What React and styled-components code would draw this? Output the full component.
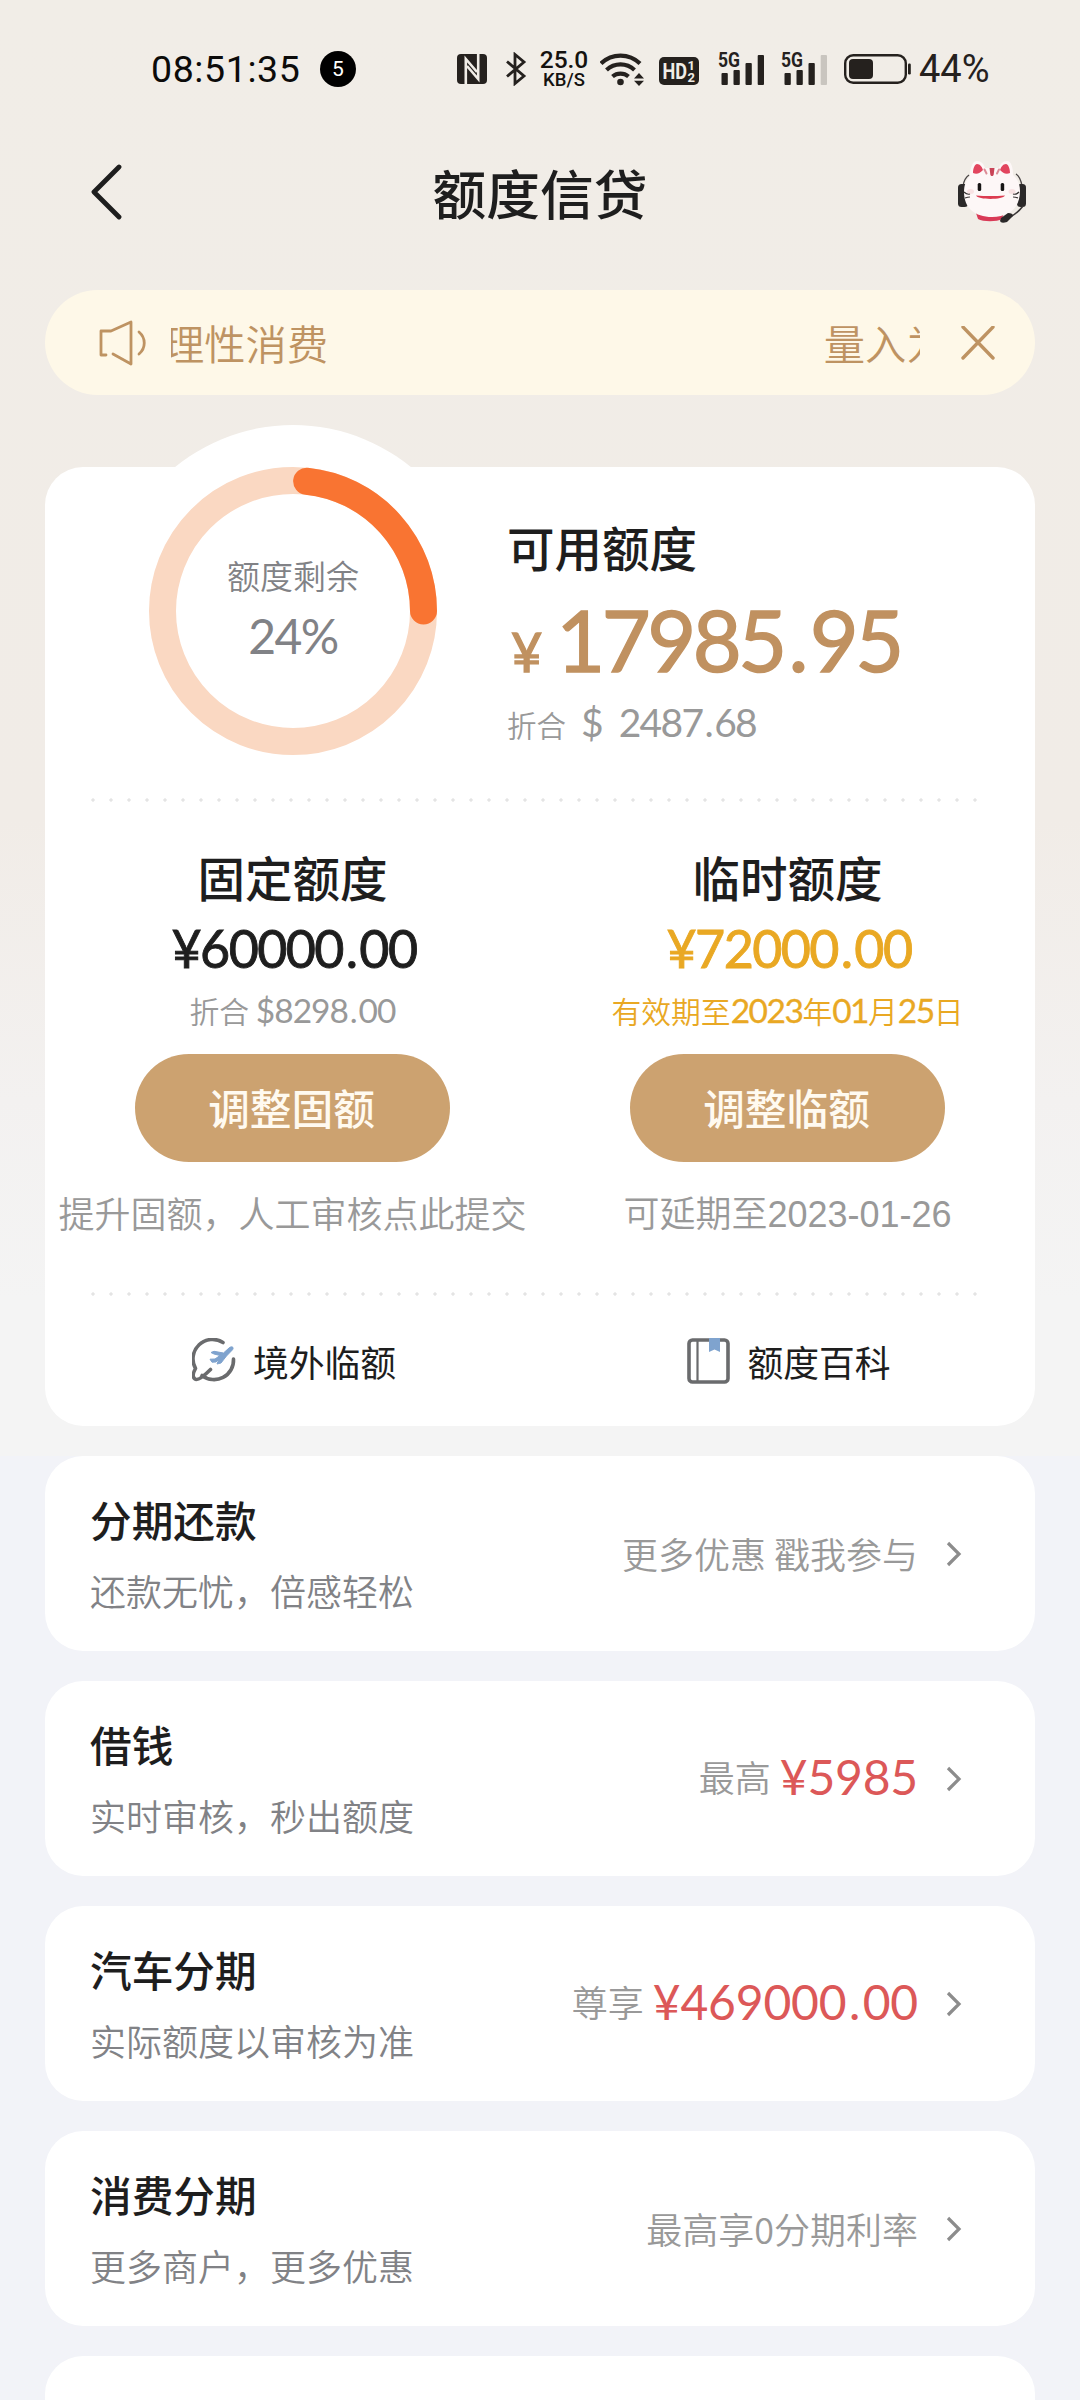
import React from 'react';
import styled, { createGlobalStyle } from 'styled-components';

const palette = {
  ink: '#1e1e1e',
  status: '#25211e',
  grey: '#999999',
  slate: '#818286',
  bronze: '#c09160',
  tan: '#cca270',
  amber: '#e9a823',
  red: '#dc5858',
  notice: '#be9362',
};

const cjk = `'Noto Sans CJK SC', sans-serif`;

const GlobalStyle = createGlobalStyle`
  body {
    background: #f2f3f8;
    margin: 0;
  }
  * {
    box-sizing: border-box;
  }
`;

const Page = styled.div`
  background: linear-gradient(
      180deg,
      #f1ede7 0,
      #f1ece7 820px,
      #f3f1f0 1100px,
      #f4f4f4 1300px,
      #f4f4f4 1456px,
      transparent 1456px
    ),
    #f2f3f8;
  color: ${palette.ink};
  font-family: ${cjk};
  height: 2400px;
  overflow: hidden;
  width: 1080px;
  svg {
    display: block;
    flex: none;
  }
`;

// digits sit in Lato, everything else in the CJK face
const Digits = styled.span`
  font-family: Lato, ${cjk};
  font-size: ${p => p.$size}px;
  font-weight: 400;
  letter-spacing: ${p => p.$track || 0}px;
  line-height: 1;
  -webkit-text-stroke: ${p => p.$stroke || 0}px currentColor;
`;

const Dot = styled.span`
  margin: 0 0.055em;
`;

const Num = ({ size, track, stroke, children }) => {
  const [whole, cents] = children.split('.');
  return (
    <Digits $size={size} $track={track} $stroke={stroke}>
      {whole}
      {cents && <Dot>.</Dot>}
      {cents}
    </Digits>
  );
};

const StatusBar = styled.div`
  align-items: center;
  color: ${palette.status};
  display: flex;
  font-family: Roboto, sans-serif;
  height: 137px;
  padding-left: 151px;
`;

const Clock = styled.div`
  color: #0c0b0a;
  font-size: 37.5px;
  letter-spacing: 0.6px;
  line-height: 44px;
  width: 169px;
`;

const Badge = styled.div`
  background: #000;
  border-radius: 50%;
  color: #fff;
  font-size: 21px;
  height: 36px;
  line-height: 36px;
  margin-right: 101px;
  text-align: center;
  width: 36px;
`;

const Speed = styled.div`
  color: #14120f;
  font-size: 24.5px;
  font-weight: 500;
  line-height: 20px;
  margin: 0 10px 0 11px;
  padding-top: 2px;
  text-align: center;
  width: 52px;
  small {
    display: block;
    font-size: 18.5px;
  }
`;

const Percent = styled.div`
  font-size: 38px;
  line-height: 44px;
  margin-left: 8px;
`;

const StatusIcon = styled.svg`
  margin: ${p => p.$margin || 0};
`;

const Header = styled.div`
  align-items: center;
  display: flex;
  height: 109px;
  justify-content: space-between;
  padding: 0 53px;
`;

const Title = styled.h1`
  font-size: 53.7px;
  font-weight: 500;
  line-height: 80px;
  margin: 0;
`;

const HeaderSide = styled.div`
  display: flex;
  justify-content: ${p => (p.$right ? 'flex-end' : 'flex-start')};
  padding-left: ${p => (p.$right ? 0 : 36)}px;
  width: 120px;
`;

const Notice = styled.div`
  align-items: center;
  background: #fef8e8;
  border-radius: 53px;
  color: ${palette.notice};
  display: flex;
  height: 105px;
  margin: 44px 45px 0;
  padding: 0 40px 0 54px;
`;

const Marquee = styled.div`
  display: flex;
  font-size: 41.3px;
  font-weight: 350;
  justify-content: space-between;
  line-height: 60px;
  margin: 0 41px 2px 24px;
  overflow: hidden;
  white-space: nowrap;
  width: 751px;
  span:first-child {
    margin-left: -8px;
  }
  span:last-child {
    margin-right: -69px;
  }
`;

const Card = styled.section`
  background: #fff;
  border-radius: 38px;
  margin: 0 45px;
`;

const CreditCard = styled(Card)`
  height: 959px;
  margin-top: 72px;
`;

const Summary = styled.div`
  display: flex;
  height: 331px;
  padding-left: 62px;
`;

const Gauge = styled.div`
  align-items: center;
  background: #fff;
  border-radius: 50%;
  color: ${palette.slate};
  display: flex;
  flex-direction: column;
  height: 372px;
  margin-top: -42px;
  padding-top: 125px;
  position: relative;
  width: 372px;
  svg {
    left: 0;
    position: absolute;
    top: 0;
  }
`;

const GaugeLabel = styled.div`
  font-size: 33px;
  font-weight: 350;
  line-height: 50px;
  margin-bottom: 12px;
`;

const Available = styled.div`
  padding: 45px 0 0 28px;
`;

const Heading = styled.h2`
  font-size: 47.5px;
  font-weight: 500;
  line-height: 70px;
  margin: 0;
`;

const Amount = styled.div`
  align-items: baseline;
  color: ${palette.bronze};
  display: flex;
  gap: 14px;
  height: 120px;
  padding: 16px 0 0 4px;
`;

const Converted = styled.div`
  align-items: baseline;
  color: ${palette.grey};
  display: flex;
  font-size: 29.5px;
  font-weight: 350;
  gap: 15px;
  line-height: 44px;
`;

const Dots = styled.div`
  background: radial-gradient(circle at 2px 2px, #e4e4e4 1.3px, transparent 2px) 0 0 / 18px 4px repeat-x;
  height: 4px;
  margin: 0 54px 0 46px;
`;

const Columns = styled.div`
  display: grid;
  grid-template-columns: 1fr 1fr;
`;

const Limit = styled.div`
  align-items: center;
  display: flex;
  flex-direction: column;
  height: 490px;
  padding-top: 40px;
`;

const LimitAmount = styled.div`
  color: ${p => p.$color};
  display: flex;
  height: 74px;
  padding: 10px 0 0 3px;
`;

const LimitNote = styled.div`
  color: ${p => p.$color};
  font-size: 29.8px;
  font-weight: 350;
  height: 68px;
  line-height: 48px;
  white-space: nowrap;
`;

const Button = styled.button`
  background: ${palette.tan};
  border: 0;
  border-radius: 54px;
  color: #fffaf0;
  font-family: inherit;
  font-size: 41.7px;
  font-weight: 500;
  height: 108px;
  line-height: 60px;
  padding: 0 2px 3px 0;
  width: 315px;
`;

const Hint = styled.div`
  color: ${palette.grey};
  font-family: ${p => (p.$latin ? `'Liberation Sans', ${cjk}` : cjk)};
  font-size: 36px;
  font-weight: 350;
  line-height: 54px;
  margin-top: ${p => (p.$latin ? 26 : 23)}px;
  white-space: nowrap;
`;

const QuickLink = styled.div`
  align-items: center;
  display: flex;
  font-size: 35.8px;
  gap: 17px;
  height: 129px;
  justify-content: center;
  line-height: 54px;
  padding-left: 3px;
`;

const List = styled.div`
  display: flex;
  flex-direction: column;
  gap: 30px;
  margin-top: 30px;
`;

const Item = styled(Card)`
  align-items: center;
  display: flex;
  flex: none;
  height: 195px;
  justify-content: space-between;
  padding: 0 72px 0 45px;
`;

const ItemTitle = styled.h3`
  font-size: 41.7px;
  font-weight: 500;
  line-height: 60px;
  margin: -2px 0 14px;
`;

const ItemSub = styled.p`
  color: ${palette.slate};
  font-size: 36px;
  font-weight: 350;
  line-height: 54px;
  margin: 0;
`;

const ItemValue = styled.div`
  align-items: center;
  color: ${palette.grey};
  display: flex;
  font-size: 36px;
  font-weight: 350;
  line-height: 54px;
  svg {
    margin-left: 27px;
  }
`;

const ItemNote = styled.span`
  padding-bottom: ${p => (p.$raised ? 5 : 2)}px;
`;

const Price = styled.span`
  color: ${palette.red};
  line-height: 48px;
  margin-left: 9px;
  padding-bottom: 1px;
`;

const NfcIcon = () => (
  <svg width="30" height="30" viewBox="0 0 30 30">
    <rect width="30" height="30" rx="4" fill={palette.status} />
    <path d="M8.8 30V5L20 18M21.2 0v25L10 12" fill="none" stroke="#f1ede7" strokeWidth="2.6" />
  </svg>
);

const BluetoothIcon = () => (
  <StatusIcon $margin="0 0 0 18px" width="22" height="34" viewBox="0 0 22 34">
    <path d="M2 9.5 19 24l-9 7.5v-29L19 10 2 24.5" fill="none" stroke={palette.status} strokeWidth="2.8" />
  </StatusIcon>
);

const WifiIcon = () => (
  <svg width="44" height="34" viewBox="0 0 44 34">
    <g fill="none" stroke={palette.status} strokeWidth="4.2">
      <path d="M1 11.5a28 28 0 0 1 39 0" />
      <path d="M6.5 18a20.5 20.5 0 0 1 28 0" />
      <path d="M12.5 24.5a12.5 12.5 0 0 1 16 0" />
    </g>
    <g fill={palette.status}>
      <circle cx="20.5" cy="30" r="3.3" />
      <path d="M34 26.5h10l-5-5.5zM34 28.8h10l-5 5.2z" />
    </g>
  </svg>
);

const HdText = styled.text`
  fill: #f1ede7;
  font-family: Roboto, sans-serif;
  font-weight: 700;
`;

const HdIcon = () => (
  <StatusIcon $margin="4px 19px 0 15px" width="40" height="28" viewBox="0 0 40 28">
    <rect width="40" height="28" rx="5" fill={palette.status} />
    <HdText x="3.5" y="21.5" fontSize="22" textLength="24.5" lengthAdjust="spacingAndGlyphs">HD</HdText>
    <HdText x="28.5" y="13" fontSize="13">1</HdText>
    <HdText x="28.5" y="24.5" fontSize="13">2</HdText>
  </StatusIcon>
);

const SignalText = styled.text`
  fill: ${palette.status};
  font-family: Roboto, sans-serif;
  font-size: 20.5px;
  font-weight: 700;
`;

const Signal = ({ weak }) => (
  <StatusIcon $margin="0 17px 0 0" width="46" height="33" viewBox="0 0 46 33" overflow="visible">
    <SignalText x="0" y="15" textLength="22" lengthAdjust="spacingAndGlyphs">5G</SignalText>
    <g fill={palette.status}>
      <rect x="3.5" y="21" width="6.3" height="12" rx="1" />
      <rect x="15.5" y="18" width="6.3" height="15" rx="1" />
      <rect x="27.5" y="11" width="6.3" height="22" rx="1" />
      <rect x="39.7" y="3" width="6.3" height="30" rx="1" fill={weak ? '#c9c5bf' : palette.status} />
    </g>
  </StatusIcon>
);

const BatteryIcon = () => (
  <svg width="67" height="30" viewBox="0 0 67 30">
    <rect x="1.2" y="1.2" width="60.6" height="27.6" rx="8" fill="none" stroke={palette.status} strokeWidth="2.4" />
    <rect x="5" y="5" width="24" height="20" rx="4" fill={palette.status} />
    <rect x="64" y="9.5" width="2.8" height="11" rx="1.2" fill={palette.status} />
  </svg>
);

const BackIcon = () => (
  <svg width="34" height="56" viewBox="0 0 34 56">
    <path d="M30 3 5 28l25 25" fill="none" stroke={palette.ink} strokeWidth="4.8" strokeLinecap="round" strokeLinejoin="round" />
  </svg>
);

const Mascot = () => (
  <svg width="69" height="66" viewBox="0 0 69 66">
    <path d="M5 27C6 21 8 18 11 16M58 15c3 2 5 6 6 12" fill="none" stroke="#4a4646" strokeWidth="1.4" />
    <rect x="0" y="25" width="10" height="23" rx="3.5" fill="#2b2929" />
    <rect x="59" y="25" width="9" height="23" rx="3.5" fill="#2b2929" />
    <path d="M18 54h28l-2 6c-5 3-19 3-24 0z" fill="#d93a57" />
    <path d="M12 17C12 8 15 2 19 2c4 0 7 3 8 7h14c1-4 4-7 8-7s6 6 6 14c5 4 7 10 7 16 0 17-11 26-28 26S6 49 6 33c0-7 2-12 6-16z" fill="#fdf7f7" />
    <path d="M15 14c0-5 2-9 4-9 3 0 5 3 6 6-3 3-6 5-10 3zM52 14c0-5-2-9-4-9-3 0-5 3-6 6 3 3 6 5 10 3z" fill="#e2455f" />
    <path d="M31.5 9h5l-.8 6.500c-.7 2-2.700 2-3.400 0z" fill="#c94357" />
    <path d="M26.5 10.500l2 4M41 10.500l-2 4" stroke="#dc8c97" strokeWidth="2" strokeLinecap="round" />
    <ellipse cx="12.5" cy="32.5" rx="3.5" ry="2.5" fill="#f8e2e3" />
    <ellipse cx="54" cy="32.5" rx="3.5" ry="2.5" fill="#f8e2e3" />
    <rect x="19.7" y="24" width="3.5" height="8" rx="1.5" fill="#171515" />
    <rect x="42.7" y="24" width="3.5" height="8" rx="1.5" fill="#171515" />
    <path d="M18 36.5q14.500 1 29 0c-2 4.500-27 4.500-29 0z" fill="#dc3b50" />
    <path d="M6 33q3 3 6 2M7 39q3-1 5-1M61 33q-3 3-6 2M60 39q-3-1-5-1" fill="none" stroke="#393535" strokeWidth="1.2" />
    <path d="M65 47C62 51 58 55 52 58" fill="none" stroke="#3a3737" strokeWidth="1.6" />
    <path d="M43 59l7-5q5 0 5 3l-6 6q-6 2-7-1z" fill="#2b2929" />
  </svg>
);

const SpeakerIcon = () => (
  <svg width="48" height="46" viewBox="0 0 48 46">
    <g fill="none" stroke={palette.notice} strokeWidth="2.8" strokeLinecap="round" strokeLinejoin="round">
      <path d="M7 35H2V11h10L32 2v42L14 34" />
      <path d="M40 12c7 6 7 16 0 22" />
    </g>
  </svg>
);

const CloseIcon = () => (
  <svg width="34" height="34" viewBox="0 0 34 34">
    <path d="M2 1l30 31M32 1L2 32" stroke={palette.notice} strokeWidth="3.4" strokeLinecap="round" />
  </svg>
);

const ringPoint = deg => {
  const a = (deg * Math.PI) / 180;
  return `${186 + 130.5 * Math.sin(a)} ${186 - 130.5 * Math.cos(a)}`;
};

const Ring = () => (
  <svg width="372" height="372" viewBox="0 0 372 372" fill="none" strokeWidth="27">
    <circle cx="186" cy="186" r="130.5" stroke="#fad8c2" />
    <path d={`M${ringPoint(6)}A130.5 130.5 0 0 1 ${ringPoint(90)}`} stroke="#f97432" strokeLinecap="round" />
  </svg>
);

const PlaneIcon = () => (
  <svg width="44" height="46" viewBox="0 0 44 46">
    <g fill="none" stroke="#6a6b6d" strokeWidth="3.6" strokeLinecap="round" strokeLinejoin="round">
      <path d="M31 4.5A19.5 19.5 0 0 0 3.5 30.5C1 35 0 39 3 41c3 2 9-3 15.5-9.5" />
      <path d="M10 37.5A19.5 19.5 0 0 0 41.5 21" />
    </g>
    <path
      d="M19 14.5l3-1.200 9.500 1.700 5.500-5c3-2.500 5.500-.5 3.300 2L34.500 18l-5.500 7-4 1 2-5-3 3-4 .2-2-3 5-.2 5-3.500-6-1.500z"
      fill="#7fa3ce"
      stroke="#7fa3ce"
    />
  </svg>
);

const BookIcon = () => (
  <svg width="43" height="46" viewBox="0 0 43 46">
    <rect x="2" y="2" width="39" height="42" rx="3.5" fill="none" stroke="#6a6b6d" strokeWidth="3.6" />
    <path d="M10.5 3v40" stroke="#6a6b6d" strokeWidth="2.2" />
    <path d="M22 0h11v14l-5.500-2.500L22 14z" fill="#7fa3ce" />
  </svg>
);

const ChevronIcon = () => (
  <svg width="18" height="26" viewBox="0 0 18 26">
    <path d="M3 2l11 11L3 24" fill="none" stroke="#8c8c8c" strokeWidth="3.2" />
  </svg>
);

const items = [
  { title: '分期还款', sub: '还款无忧，倍感轻松', note: '更多优惠 戳我参与' },
  { title: '借钱', sub: '实时审核，秒出额度', note: '最高', price: '¥5985' },
  { title: '汽车分期', sub: '实际额度以审核为准', note: '尊享', price: '¥469000.00' },
  { title: '消费分期', sub: '更多商户，更多优惠', note: '最高享0分期利率' },
];

export default () => (
  <Page>
    <GlobalStyle />
    <StatusBar>
      <Clock>08:51:35</Clock>
      <Badge>5</Badge>
      <NfcIcon />
      <BluetoothIcon />
      <Speed>
        25.0
        <small>KB/S</small>
      </Speed>
      <WifiIcon />
      <HdIcon />
      <Signal />
      <Signal weak />
      <BatteryIcon />
      <Percent>44%</Percent>
    </StatusBar>
    <Header>
      <HeaderSide>
        <BackIcon />
      </HeaderSide>
      <Title>额度信贷</Title>
      <HeaderSide $right>
        <Mascot />
      </HeaderSide>
    </Header>
    <Notice>
      <SpeakerIcon />
      <Marquee>
        <span>理性消费</span>
        <span>量入为出</span>
      </Marquee>
      <CloseIcon />
    </Notice>
    <CreditCard>
      <Summary>
        <Gauge>
          <Ring />
          <GaugeLabel>额度剩余</GaugeLabel>
          <Num size={48} track={-1.5}>24%</Num>
        </Gauge>
        <Available>
          <Heading>可用额度</Heading>
          <Amount>
            <Num size={54} stroke={1.4}>¥</Num>
            <Num size={84.5} track={-3.5} stroke={1.4}>17985.95</Num>
          </Amount>
          <Converted>
            折合
            <Num size={39}>$</Num>
            <Num size={39} track={-1.7}>2487.68</Num>
          </Converted>
        </Available>
      </Summary>
      <Dots />
      <Columns>
        <Limit>
          <Heading>固定额度</Heading>
          <LimitAmount $color={palette.ink}>
            <Num size={52} track={-1.6} stroke={0.9}>¥60000.00</Num>
          </LimitAmount>
          <LimitNote $color={palette.grey}>
            折合 <Num size={33.5} track={-1}>$8298.00</Num>
          </LimitNote>
          <Button>调整固额</Button>
          <Hint>提升固额，人工审核点此提交</Hint>
        </Limit>
        <Limit>
          <Heading>临时额度</Heading>
          <LimitAmount $color={palette.amber}>
            <Num size={52} track={-1.6} stroke={0.9}>¥72000.00</Num>
          </LimitAmount>
          <LimitNote $color={palette.amber}>
            有效期至<Num size={33.5} track={-1.5} stroke={0.3}>2023</Num>年
            <Num size={33.5} track={-1.5} stroke={0.3}>01</Num>月
            <Num size={33.5} track={-1.5} stroke={0.3}>25</Num>日
          </LimitNote>
          <Button>调整临额</Button>
          <Hint $latin>可延期至2023-01-26</Hint>
        </Limit>
      </Columns>
      <Dots />
      <Columns>
        <QuickLink>
          <PlaneIcon />
          境外临额
        </QuickLink>
        <QuickLink>
          <BookIcon />
          额度百科
        </QuickLink>
      </Columns>
    </CreditCard>
    <List>
      {items.map(item => (
        <Item key={item.title}>
          <div>
            <ItemTitle>{item.title}</ItemTitle>
            <ItemSub>{item.sub}</ItemSub>
          </div>
          <ItemValue>
            <ItemNote $raised={!!item.price}>{item.note}</ItemNote>
            {item.price && (
              <Price>
                <Num size={48} track={-0.2}>{item.price}</Num>
              </Price>
            )}
            <ChevronIcon />
          </ItemValue>
        </Item>
      ))}
      <Item />
    </List>
  </Page>
);
